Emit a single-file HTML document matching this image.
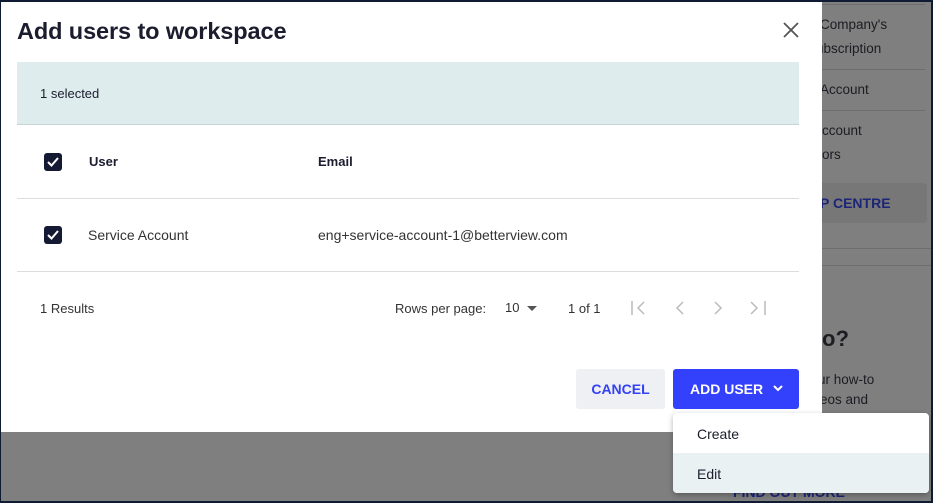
<!DOCTYPE html>
<html><head><style>
*{box-sizing:border-box;margin:0;padding:0}
body{width:933px;height:503px;overflow:hidden;background:#7f7f7f;font-family:"Liberation Sans",sans-serif;position:relative;color:#1b1c2e}
.frame{position:absolute;inset:0;border:2px solid #0f1a33;border-left-width:1px;z-index:10;pointer-events:none}
.bg{position:absolute;color:#1c1c22;font-size:13.5px}
.hl{position:absolute;left:800px;right:8px;height:1px;background:#6d6d6d}
.modal{position:absolute;left:0;top:0;width:822px;height:432px;background:#fff}
h1{position:absolute;left:17px;top:18px;font-size:23.5px;font-weight:bold;color:#1b1c2e;letter-spacing:-0.1px}
.sel{position:absolute;left:17px;top:62px;width:782px;height:63px;background:#deeced;border-bottom:1px solid #c9d3d6;font-size:13px;padding:24px 23px}
.row{position:absolute;left:17px;width:782px;border-bottom:1px solid #ddd;font-size:14px}
.cb{position:absolute;left:27px;width:18px;height:18px;background:#141a33;border-radius:3px}
.cb svg{position:absolute;left:2px;top:3px}
.t{position:absolute;font-size:14px}
.btn{position:absolute;top:369px;height:40px;border-radius:3px;font-weight:bold;font-size:14px;text-align:center;line-height:40px}
</style></head><body>
<div class="hl" style="top:4px"></div>
<div class="bg" style="left:820px;top:17px">Company's</div>
<div class="bg" style="left:816px;top:41px">ubscription</div>
<div class="hl" style="top:69px"></div>
<div class="bg" style="left:820px;top:82px">Account</div>
<div class="hl" style="top:110px"></div>
<div class="bg" style="left:822px;top:123px">ccount</div>
<div class="bg" style="left:822px;top:147px">ors</div>
<div style="position:absolute;left:800px;top:183px;width:127px;height:40px;background:#777;border-radius:4px"></div>
<div class="bg" style="left:820px;top:195px;font-weight:bold;color:#1c2577;font-size:14px">P CENTRE</div>
<div class="hl" style="top:248px;left:800px;right:2px"></div>
<div class="hl" style="top:265px;left:800px;right:2px"></div>
<div class="bg" style="left:822px;top:326px;font-weight:bold;font-size:22px">o?</div>
<div class="bg" style="left:818px;top:372px">ur how-to</div>
<div class="bg" style="left:820px;top:392px">eos and</div>
<div class="bg" style="left:733px;top:484px;font-weight:bold;color:#1c2577;font-size:14px">FIND OUT MORE</div>

<div class="modal">
<h1>Add users to workspace</h1>
<svg style="position:absolute;left:783px;top:22px" width="16" height="16" viewBox="0 0 16 16"><path d="M1 1L15 15M15 1L1 15" stroke="#555" stroke-width="1.8"/></svg>
<div class="sel">1 selected</div>
<div class="row" style="top:125px;height:74px"></div>
<div class="cb" style="left:44px;top:153px"><svg width="14" height="12" viewBox="0 0 14 12"><path d="M2 6l3.5 3.5L12 2" stroke="#fff" stroke-width="2" fill="none"/></svg></div>
<div class="t" style="left:89px;top:154px;font-weight:bold;font-size:13px">User</div>
<div class="t" style="left:318px;top:154px;font-weight:bold;font-size:13px">Email</div>
<div class="row" style="top:199px;height:73px"></div>
<div class="cb" style="left:44px;top:226px"><svg width="14" height="12" viewBox="0 0 14 12"><path d="M2 6l3.5 3.5L12 2" stroke="#fff" stroke-width="2" fill="none"/></svg></div>
<div class="t" style="left:88px;top:227px;color:#333">Service Account</div>
<div class="t" style="left:318px;top:227px;color:#333">eng+service-account-1@betterview.com</div>
<div class="t" style="left:40px;top:301px;font-size:13px;color:#333">1 Results</div>
<div class="t" style="left:395px;top:301px;font-size:13px;color:#333">Rows per page:</div>
<div class="t" style="left:505px;top:300px;font-size:13px;color:#333">10</div>
<svg style="position:absolute;left:527px;top:306px" width="10" height="6"><path d="M0 0h10L5 5z" fill="#555"/></svg>
<div class="t" style="left:568px;top:301px;font-size:13px;color:#333">1 of 1</div>
<svg style="position:absolute;left:630px;top:300px" width="140" height="16" viewBox="0 0 140 16" fill="none" stroke="#bbb" stroke-width="1.5"><path d="M2 1v14M14 2L8 8l6 6M53 2L47 8l6 6M85 2l6 6-6 6M121 2l6 6-6 6M135 1v14"/></svg>
<div class="btn" style="left:576px;width:89px;background:#eef0f3;color:#3440f5">CANCEL</div>
<div class="btn" style="left:673px;width:126px;background:#3340fc;color:#fff;text-align:left;padding-left:17px">ADD USER
<svg style="position:absolute;left:100px;top:16px" width="10" height="7"><path d="M1 1l4 4 4-4" stroke="#fff" stroke-width="2" fill="none"/></svg></div>
</div>
<div style="position:absolute;left:673px;top:413px;width:256px;height:80px;background:#fff;border-radius:4px;box-shadow:0 2px 6px rgba(0,0,0,.3);overflow:hidden">
<div style="height:40px;padding:13px 24px;font-size:14px">Create</div>
<div style="height:40px;padding:13px 24px;font-size:14px;background:#eaf1f3">Edit</div>
</div>
<div class="frame"></div>
</body></html>
